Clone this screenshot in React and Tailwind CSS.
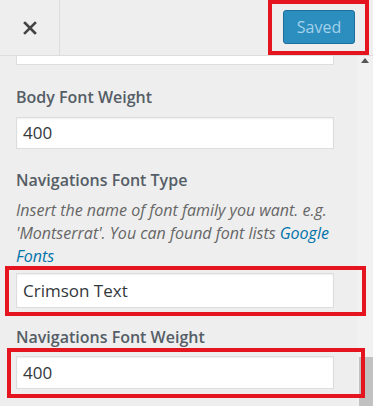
import React from 'react';

// ── red annotation frame, drawn over the wrapped control ─────────────────────

const Marked = ({ children, inset }) => (
  <div className="relative">
    {children}
    <div className={`pointer-events-none absolute border-4 border-[#e4151f] ${inset}`} />
  </div>
);

const TextInput = ({ value, className = '' }) => (
  <div
    className={`w-[318px] bg-white border border-[#ddd] shadow-[inset_0_1px_2px_rgba(0,0,0,0.07)] px-[6px] flex items-center text-[17px] text-[#32373c] ${className}`}
  >
    {value}
  </div>
);

const Label = ({ children, className = '' }) => (
  <div className={`text-[16px] leading-6 font-semibold text-[#555d66] ${className}`}>{children}</div>
);

export default function App() {
  return (
    <div className="w-[373px] h-[406px] overflow-hidden bg-[#eee] font-['Open_Sans',sans-serif] flex flex-col">
      {/* ── Header ── */}
      <div className="h-[56px] shrink-0 flex border-b border-[#ddd] bg-[#eee]">
        <button className="w-[60px] h-full border-r border-[#ddd] flex items-center justify-center">
          <svg width="14" height="14" viewBox="0 0 14 14">
            <path d="M2 2 L12 12 M12 2 L2 12" stroke="#444" strokeWidth="2.6" strokeLinecap="square" />
          </svg>
        </button>
        <div className="flex-1" />
        <div className="w-[105px] relative flex items-start pt-[10px] pl-[15px]">
          <div className="w-[72px] h-[34px] rounded-[3px] bg-[#2c8dbf] border border-[#1f6f9c] flex items-center justify-center text-[16px] text-[#a3d2ea]">
            Saved
          </div>
          <div className="pointer-events-none absolute left-0 top-0 w-[101px] h-[55px] border-4 border-[#e4151f]" />
        </div>
      </div>

      {/* ── Body ── */}
      <div className="flex-1 flex">
        <div className="w-[357px] pl-[16px]">
          <div className="w-[318px] h-[9px] bg-white border border-t-0 border-[#ddd]" />

          <Label className="mt-[20px]">Body Font Weight</Label>
          <TextInput value="400" className="mt-[8px] h-[32px]" />

          <Label className="mt-[19px]">Navigations Font Type</Label>
          <p className="mt-[7px] w-[336px] text-[16px] leading-[23px] italic text-[#666]">
            Insert the name of font family you want. e.g. 'Montserrat'. You can found font lists{' '}
            <span className="text-[#0073aa]">Google Fonts</span>
          </p>
          <Marked inset="-left-[11px] -right-[9px] -top-[7px] -bottom-[8px]">
            <TextInput value="Crimson Text" className="mt-[5px] h-[35px]" />
          </Marked>

          <Label className="mt-[17px]">Navigations Font Weight</Label>
          <Marked inset="-left-[9px] -right-[8px] -top-[8px] -bottom-[9px]">
            <TextInput value="400" className="mt-[7px] h-[33px]" />
          </Marked>
        </div>

        {/* ── Scrollbar ── */}
        <div className="w-[16px] bg-[#f1f1f1] flex flex-col items-center">
          <svg width="8" height="5" viewBox="0 0 8 5" className="mt-[2px]">
            <path d="M0 5 L4 0 L8 5 Z" fill="#555" />
          </svg>
          <div className="mt-auto w-[14px] ml-[2px] h-[49px] bg-[#c1c1c1]" />
        </div>
      </div>
    </div>
  );
}
